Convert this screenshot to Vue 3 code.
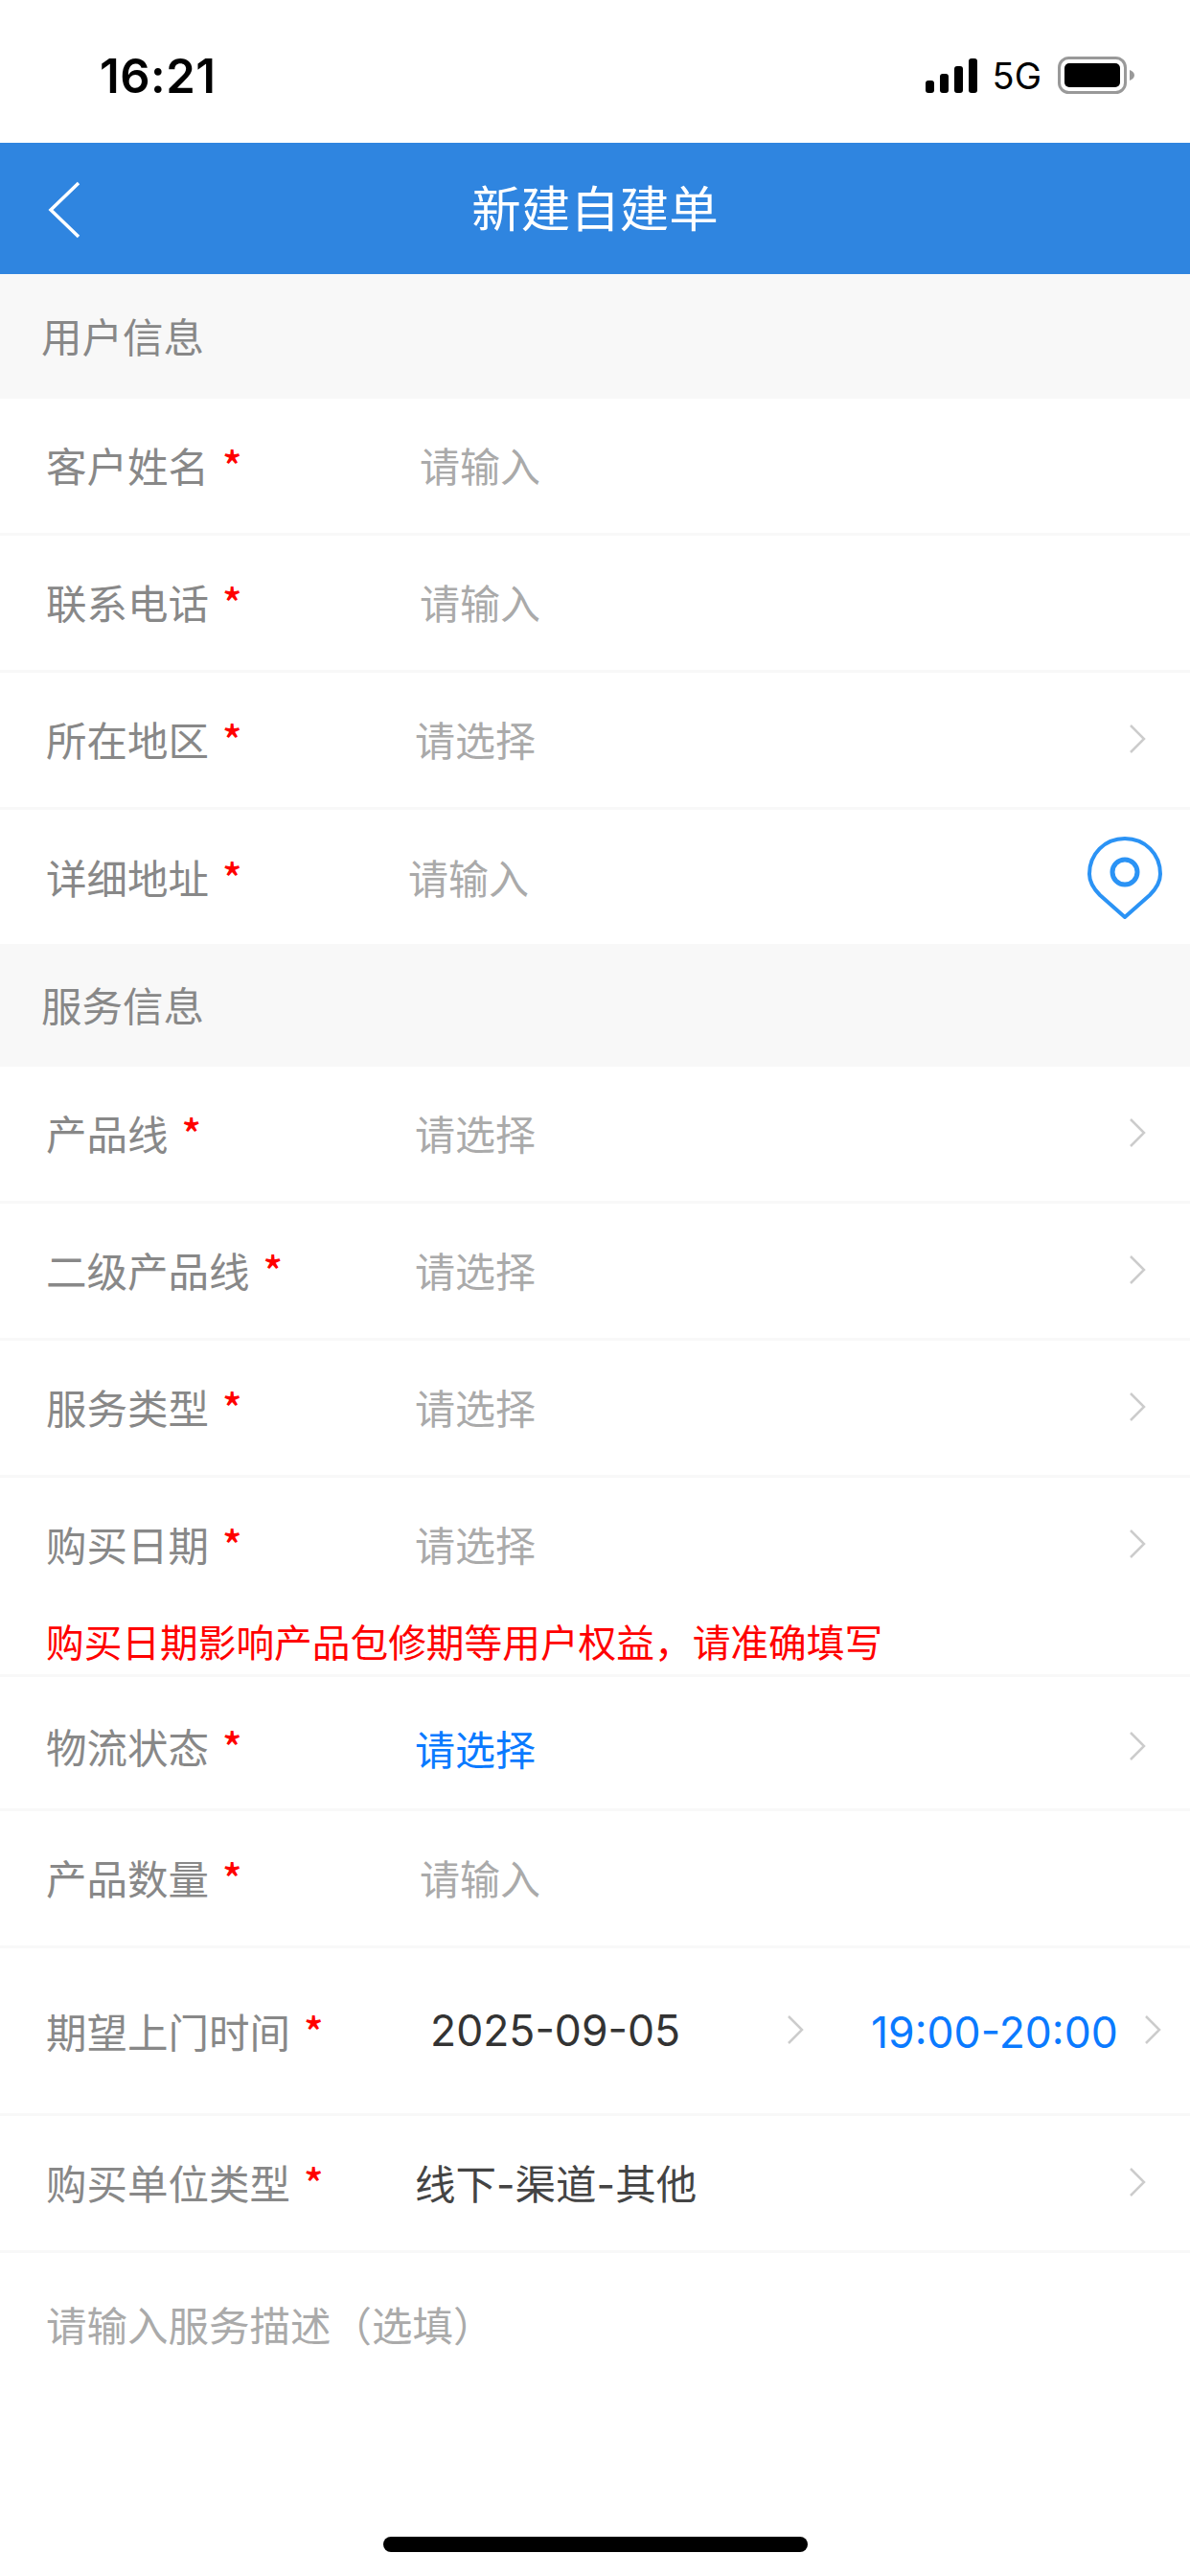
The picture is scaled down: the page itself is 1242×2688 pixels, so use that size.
<script setup>
const group1 = [
  { label: '客户姓名', value: '请输入', kind: 'input' },
  { label: '联系电话', value: '请输入', kind: 'input' },
  { label: '所在地区', value: '请选择', kind: 'select', arrow: true },
  { label: '详细地址', value: '请输入', kind: 'detail', pin: true, last: true },
]
const group2 = [
  { label: '产品线', value: '请选择', kind: 'select', arrow: true },
  { label: '二级产品线', value: '请选择', kind: 'select', arrow: true },
  { label: '服务类型', value: '请选择', kind: 'select', arrow: true },
]
</script>

<template>
  <div class="page">
    <header class="status">
      <span class="clock">16:21</span>
      <div class="status-right">
        <svg class="signal" width="54" height="36" viewBox="0 0 54 36">
          <rect x="0" y="23" width="9" height="13" rx="3" />
          <rect x="15" y="16" width="9" height="20" rx="3" />
          <rect x="30" y="8" width="9" height="28" rx="3" />
          <rect x="45" y="0" width="9" height="36" rx="3" />
        </svg>
        <span class="net">5G</span>
        <svg class="battery" width="80" height="39" viewBox="0 0 80 39">
          <rect x="1.5" y="1.5" width="69" height="36" rx="10" fill="none" stroke="#999" stroke-width="3" />
          <rect x="7" y="7" width="58" height="25" rx="5" fill="#000" />
          <path d="M75 14 C78 15 80 17 80 19.5 C80 22 78 24 75 25 Z" fill="#999" />
        </svg>
      </div>
    </header>

    <nav class="nav">
      <svg class="back" width="36" height="60" viewBox="0 0 36 60">
        <path d="M33 2 L4 30 L33 58" fill="none" stroke="#fff" stroke-width="3.5" />
      </svg>
      <h1 class="title">新建自建单</h1>
    </nav>

    <div class="section">用户信息</div>
    <div v-for="row in group1" :key="row.label" class="row" :class="{ last: row.last }">
      <span class="label">{{ row.label }}<i class="star">*</i></span>
      <span class="value" :class="row.kind">{{ row.value }}</span>
      <svg v-if="row.arrow" class="chevron" width="18" height="30" viewBox="0 0 18 30">
        <path d="M2 1 L16 15 L2 29" fill="none" stroke="#ccc" stroke-width="2.5" />
      </svg>
      <svg v-if="row.pin" class="pin" width="78" height="88" viewBox="0 0 78 88">
        <path d="M39 84 L13 61 C6 54 2 47 2 39 C2 18 18 2 39 2 C60 2 76 18 76 39 C76 47 72 54 65 61 Z" fill="none" stroke="#2b93f5" stroke-width="4" stroke-linejoin="round" />
        <circle cx="39" cy="37" r="13" fill="none" stroke="#2b93f5" stroke-width="5" />
      </svg>
    </div>

    <div class="section second">服务信息</div>
    <div v-for="row in group2" :key="row.label" class="row">
      <span class="label">{{ row.label }}<i class="star">*</i></span>
      <span class="value" :class="row.kind">{{ row.value }}</span>
      <svg class="chevron" width="18" height="30" viewBox="0 0 18 30">
        <path d="M2 1 L16 15 L2 29" fill="none" stroke="#ccc" stroke-width="2.5" />
      </svg>
    </div>

    <div class="row date-row">
      <div class="date-main">
        <span class="label">购买日期<i class="star">*</i></span>
        <span class="value select">请选择</span>
        <svg class="chevron" width="18" height="30" viewBox="0 0 18 30">
          <path d="M2 1 L16 15 L2 29" fill="none" stroke="#ccc" stroke-width="2.5" />
        </svg>
      </div>
      <p class="warning">购买日期影响产品包修期等用户权益，请准确填写</p>
    </div>

    <div class="row logistics">
      <span class="label">物流状态<i class="star">*</i></span>
      <span class="value select blue">请选择</span>
      <svg class="chevron" width="18" height="30" viewBox="0 0 18 30">
        <path d="M2 1 L16 15 L2 29" fill="none" stroke="#ccc" stroke-width="2.5" />
      </svg>
    </div>

    <div class="row">
      <span class="label">产品数量<i class="star">*</i></span>
      <span class="value input">请输入</span>
    </div>

    <div class="row tall">
      <span class="label">期望上门时间<i class="star">*</i></span>
      <span class="date">2025-09-05</span>
      <svg class="chevron mid" width="18" height="30" viewBox="0 0 18 30">
        <path d="M2 1 L16 15 L2 29" fill="none" stroke="#ccc" stroke-width="2.5" />
      </svg>
      <span class="time">19:00-20:00</span>
      <svg class="chevron end" width="18" height="30" viewBox="0 0 18 30">
        <path d="M2 1 L16 15 L2 29" fill="none" stroke="#ccc" stroke-width="2.5" />
      </svg>
    </div>

    <div class="row">
      <span class="label">购买单位类型<i class="star">*</i></span>
      <span class="value filled">线下<span class="dash">-</span>渠道<span class="dash">-</span>其他</span>
      <svg class="chevron" width="18" height="30" viewBox="0 0 18 30">
        <path d="M2 1 L16 15 L2 29" fill="none" stroke="#ccc" stroke-width="2.5" />
      </svg>
    </div>

    <div class="desc">请输入服务描述（选填）</div>
    <div class="home-wrap"><div class="home"></div></div>
  </div>
</template>

<style>
html, body { margin: 0; background: #fff; }
</style>

<style scoped>
.page {
  width: 1242px;
  height: 2688px;
  background: #fff;
  display: flex;
  flex-direction: column;
  overflow: hidden;
  font-family: "Noto Sans CJK SC", "Noto Sans", sans-serif;
  font-size: 42.5px;
}
.status {
  height: 149px;
  box-sizing: border-box;
  display: flex;
  align-items: center;
  justify-content: space-between;
  padding: 8px 58px 0 104px;
  flex: none;
}
.clock {
  font-family: Inter, "Liberation Sans", sans-serif;
  font-weight: 600;
  font-size: 49px;
  letter-spacing: 0.5px;
  color: #000;
  margin-top: 2px;
}
.status-right { display: flex; align-items: center; }
.signal { fill: #000; margin-right: 16px; }
.net {
  font-family: Inter, "Liberation Sans", sans-serif;
  font-size: 38px;
  color: #000;
  margin-right: 17px;
}
.nav {
  height: 137px;
  flex: none;
  box-sizing: border-box;
  background: #2f85e0;
  display: flex;
  align-items: center;
  justify-content: center;
  padding-bottom: 6px;
  position: relative;
}
.back { position: absolute; left: 49px; top: 40px; }
.title {
  margin: 0;
  font-size: 51.5px;
  font-weight: 400;
  color: #fff;
}
.section {
  height: 130px;
  flex: none;
  box-sizing: border-box;
  background: #f8f8f8;
  color: #888;
  display: flex;
  align-items: center;
  padding: 0 0 2px 43px;
  line-height: 1;
}
.section.second { height: 128px; }
.row {
  height: 143px;
  flex: none;
  box-sizing: border-box;
  border-bottom: 3px solid #f8f8f8;
  display: flex;
  align-items: center;
  padding: 0 0 3px 48px;
  position: relative;
}
.row.last {
  height: 140px;
  border-bottom: 0;
  padding-bottom: 2px;
}
.row.logistics {
  height: 140px;
  padding: 6px 0 0 48px;
}
.label {
  color: #888;
  width: 385px;
  flex: none;
  white-space: nowrap;
}
.star {
  font-style: normal;
  font-weight: 500;
  color: #f00;
  margin-left: 14px;
}
.value { color: #aaa; font-size: 42px; }
.value.input { margin-left: 5px; }
.value.detail { margin-left: -7px; }
.value.blue { color: #0a7aff; margin-top: 4px; }
.value.filled { color: #444; font-size: 42.5px; }
.dash { font-family: Inter, "Liberation Sans", sans-serif; }
.chevron { flex: none; }
.row > .chevron, .date-main > .chevron { margin-left: auto; margin-right: 46px; }
.pin { margin: 6px 29px 0 auto; }
.date-row {
  height: 208px;
  flex-direction: column;
  align-items: stretch;
  padding-bottom: 0;
}
.date-main {
  height: 140px;
  box-sizing: border-box;
  padding-bottom: 3px;
  display: flex;
  align-items: center;
  flex: none;
}
.warning {
  margin: 10px 0 0;
  color: #f00;
  font-size: 39.7px;
  line-height: 1;
  white-space: nowrap;
}
.row.tall { height: 175px; padding-bottom: 2px; }
.date {
  font-family: Inter, "Liberation Sans", sans-serif;
  font-size: 44.5px;
  color: #333;
  margin: 2px 0 0 16px;
  width: 372px;
  flex: none;
}
.time {
  font-family: Inter, "Liberation Sans", sans-serif;
  font-size: 44.5px;
  color: #0a7aff;
  margin: 6px 0 0 70px;
  white-space: nowrap;
}
.row > .chevron.mid { margin: 0; }
.row > .chevron.end { margin: 0 30px 0 auto; }
.desc {
  color: #aaa;
  padding: 43px 0 0 48px;
  flex: 1;
}
.home-wrap {
  height: 41px;
  flex: none;
  display: flex;
  justify-content: center;
}
.home {
  width: 443px;
  height: 16px;
  border-radius: 8px;
  background: #000;
}
</style>
